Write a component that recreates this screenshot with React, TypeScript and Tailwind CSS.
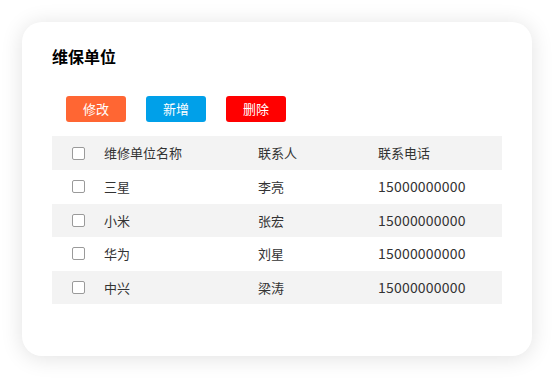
const rows = [
  { name: '三星', contact: '李亮', phone: '15000000000' },
  { name: '小米', contact: '张宏', phone: '15000000000' },
  { name: '华为', contact: '刘星', phone: '15000000000' },
  { name: '中兴', contact: '梁涛', phone: '15000000000' },
];

function Check() {
  return <span className="block w-[13px] h-[13px] border border-[#9a9a9a] rounded-[2px] bg-white" />;
}

export default function App() {
  return (
    <div
      className="w-[554px] h-[378px] bg-white pt-[22px] pl-[22px]"
      style={{ fontFamily: '"Noto Sans CJK SC", "Noto Sans", sans-serif' }}
    >
      <div className="w-[510px] h-[334px] bg-white rounded-[20px] shadow-[0_2px_22px_rgba(0,0,0,0.12)] px-[30px] pt-[22px]">
        <h2 className="text-[16px] font-bold text-black leading-[24px] h-[24px]">维保单位</h2>
        <div className="flex gap-[20px] pl-[14px] mt-[28px] text-[13px] text-white">
          <button className="w-[60px] h-[26px] rounded-[3px] bg-[#ff6633]">修改</button>
          <button className="w-[60px] h-[26px] rounded-[3px] bg-[#00a0e9]">新增</button>
          <button className="w-[60px] h-[26px] rounded-[3px] bg-[#ff0000]">删除</button>
        </div>
        <div className="mt-[14px] text-[13px] text-[#333]">
          <div className="flex items-center h-[34px] bg-[#f3f3f3]">
            <div className="w-[52px] pl-[20px]"><Check /></div>
            <div className="w-[154px]">维修单位名称</div>
            <div className="w-[120px]">联系人</div>
            <div>联系电话</div>
          </div>
          {rows.map((r, i) => (
            <div key={r.name} className={`flex items-center h-[33.5px] ${i % 2 === 1 ? 'bg-[#f3f3f3]' : ''}`}>
              <div className="w-[52px] pl-[20px]"><Check /></div>
              <div className="w-[154px]">{r.name}</div>
              <div className="w-[120px]">{r.contact}</div>
              <div className="text-[14px] tracking-[0.2px]">{r.phone}</div>
            </div>
          ))}
        </div>
      </div>
    </div>
  );
}
